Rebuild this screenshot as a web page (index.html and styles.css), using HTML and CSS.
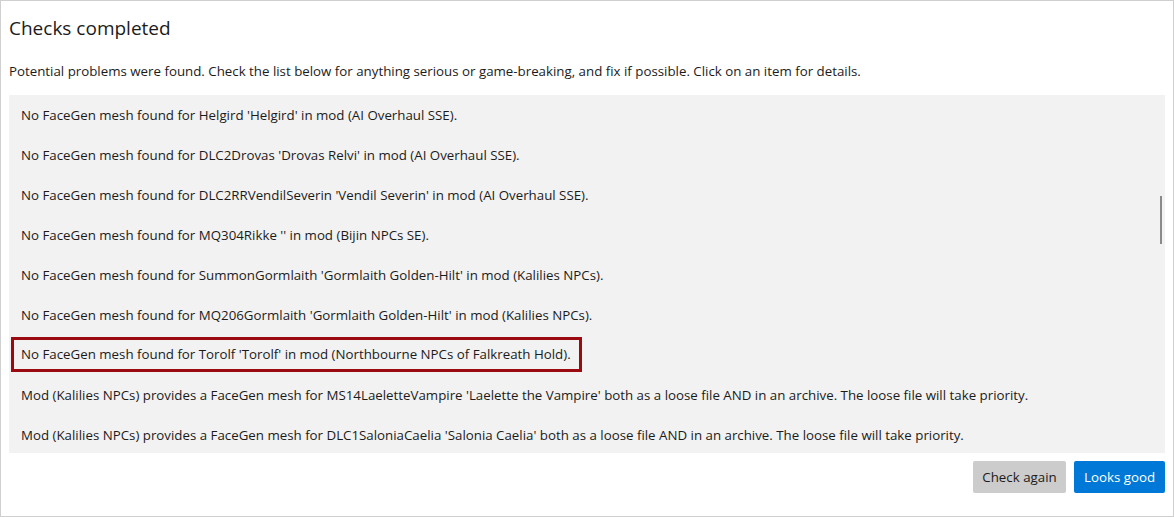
FILE: index.html
```html
<!DOCTYPE html>
<html>
<head>
<meta charset="utf-8">
<link rel="stylesheet" href="styles.css">
</head>
<body>
<div class="window">
  <h1 class="title">Checks completed</h1>
  <p class="intro">Potential problems were found. Check the list below for anything serious or game-breaking, and fix if possible. Click on an item for details.</p>
  <div class="list">
    <div class="row">No FaceGen mesh found for Helgird 'Helgird' in mod (AI Overhaul SSE).</div>
    <div class="row">No FaceGen mesh found for DLC2Drovas 'Drovas Relvi' in mod (AI Overhaul SSE).</div>
    <div class="row">No FaceGen mesh found for DLC2RRVendilSeverin 'Vendil Severin' in mod (AI Overhaul SSE).</div>
    <div class="row">No FaceGen mesh found for MQ304Rikke '' in mod (Bijin NPCs SE).</div>
    <div class="row">No FaceGen mesh found for SummonGormlaith 'Gormlaith Golden-Hilt' in mod (Kalilies NPCs).</div>
    <div class="row">No FaceGen mesh found for MQ206Gormlaith 'Gormlaith Golden-Hilt' in mod (Kalilies NPCs).</div>
    <div class="row selected"><span class="sel-box">No FaceGen mesh found for Torolf 'Torolf' in mod (Northbourne NPCs of Falkreath Hold).</span></div>
    <div class="row">Mod (Kalilies NPCs) provides a FaceGen mesh for MS14LaeletteVampire 'Laelette the Vampire' both as a loose file AND in an archive. The loose file will take priority.</div>
    <div class="row">Mod (Kalilies NPCs) provides a FaceGen mesh for DLC1SaloniaCaelia 'Salonia Caelia' both as a loose file AND in an archive. The loose file will take priority.</div>
    <div class="thumb"></div>
  </div>
  <div class="actions">
    <button class="btn btn-secondary">Check again</button>
    <button class="btn btn-primary">Looks good</button>
  </div>
</div>
</body>
</html>
```
FILE: styles.css
```css
html, body {
  margin: 0;
  padding: 0;
  background: #ffffff;
}
body {
  font-family: "Segoe UI", "Open Sans", "Noto Sans", sans-serif;
  color: #1b1b1b;
}
.window {
  width: 1174px;
  height: 517px;
  box-sizing: border-box;
  border: 1px solid #cfcfcf;
  padding: 13px 8px 0 8px;
  display: flex;
  flex-direction: column;
}
.title {
  margin: 0;
  font-size: 19px;
  font-weight: 400;
  line-height: 28px;
}
.intro {
  margin: 20px 0 0 0;
  font-size: 13.3px;
  line-height: 18px;
}
.list {
  position: relative;
  margin-top: 15px;
  height: 358px;
  overflow: hidden;
  background: #f2f2f2;
  font-size: 13.3px;
}
.row {
  height: 40px;
  line-height: 40px;
  padding-left: 12px;
  white-space: nowrap;
}
.row.selected {
  display: flex;
  align-items: flex-start;
  padding-left: 2px;
}
.sel-box {
  margin-top: 2px;
  height: 35px;
  box-sizing: border-box;
  border: 3px solid #9b0a10;
  padding: 0 8px 0 7px;
  line-height: 29px;
}
.thumb {
  position: absolute;
  right: 3px;
  top: 101px;
  width: 2px;
  height: 48px;
  background: #8a8a8a;
}
.actions {
  display: flex;
  justify-content: flex-end;
  gap: 8px;
  margin-top: 8px;
}
.btn {
  height: 32px;
  border: none;
  border-radius: 2px;
  font-family: inherit;
  font-size: 13.3px;
  padding: 0;
}
.btn-secondary {
  background: #cccccc;
  color: #1b1b1b;
  width: 93px;
}
.btn-primary {
  background: #0078d7;
  color: #ffffff;
  width: 91px;
}
```
